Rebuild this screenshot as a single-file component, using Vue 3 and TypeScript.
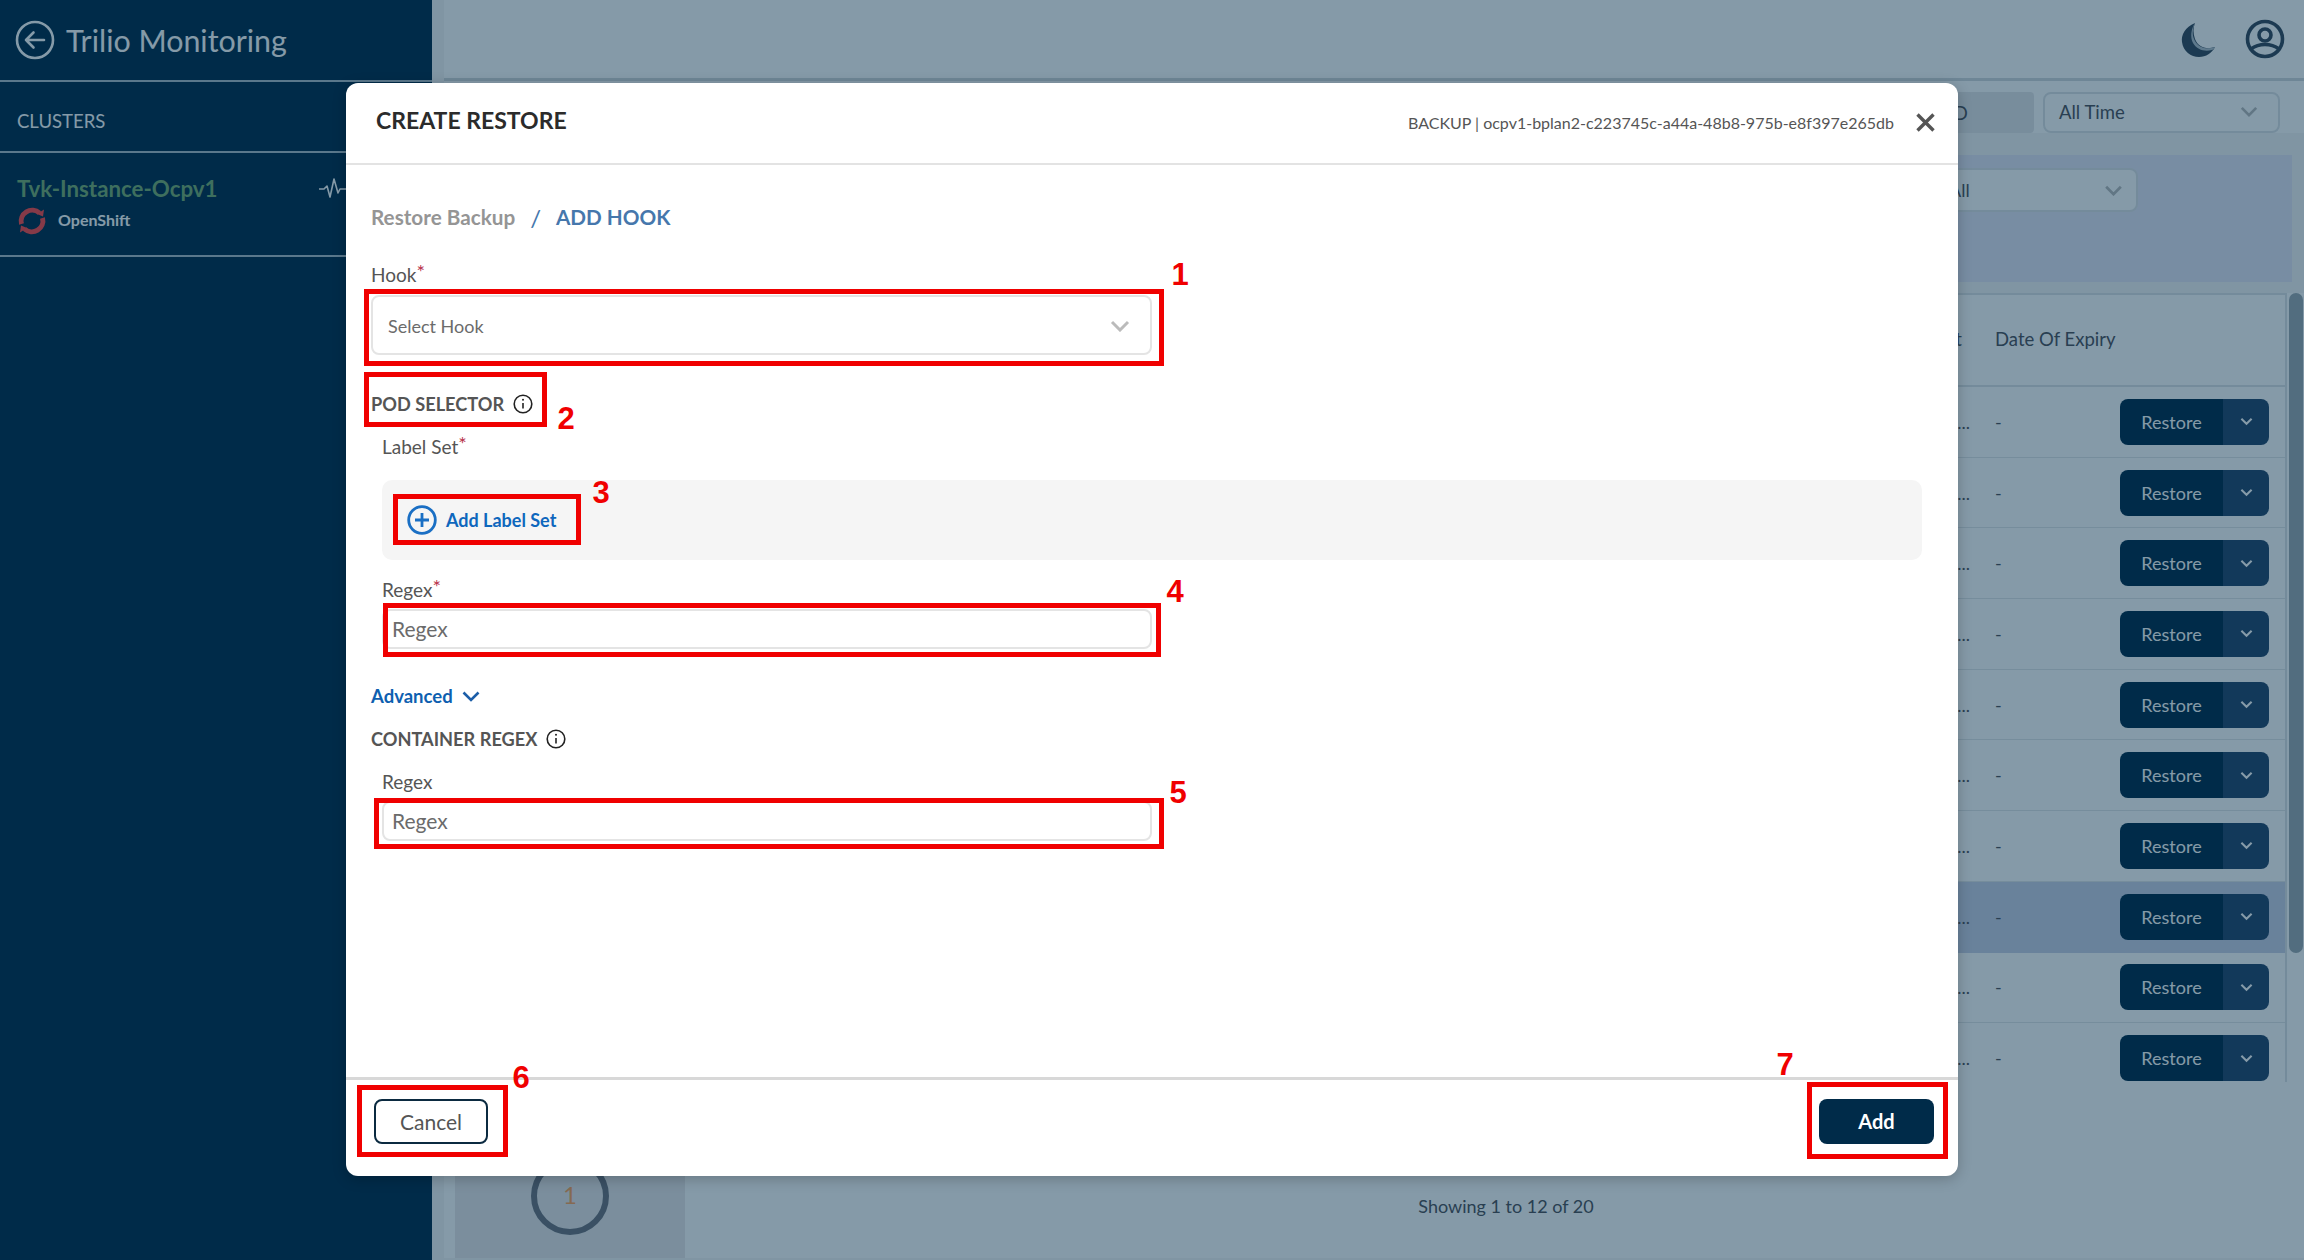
<script setup lang="ts">
interface Mark {
  id: number
  box: string
  num: string
}

const marks: Mark[] = [
  { id: 1, box: 'box-1', num: 'num-1' },
  { id: 2, box: 'box-2', num: 'num-2' },
  { id: 3, box: 'box-3', num: 'num-3' },
  { id: 4, box: 'box-4', num: 'num-4' },
  { id: 5, box: 'box-5', num: 'num-5' },
  { id: 6, box: 'box-6', num: 'num-6' },
  { id: 7, box: 'box-7', num: 'num-7' }
]

const rows: number[] = Array.from({ length: 10 }, (_, i) => i)
</script>

<template>
  <div class="app">
    <aside class="sidebar">
      <div class="brand">
        <svg class="back" viewBox="0 0 40 40" width="40" height="40" fill="none" stroke="#fff" stroke-width="2.6" stroke-linecap="round" stroke-linejoin="round">
          <circle cx="20" cy="20" r="18" />
          <path d="M29 20H11M18.5 12.5 11 20l7.5 7.5" />
        </svg>
        <span class="brand-name">Trilio Monitoring</span>
      </div>
      <div class="clusters">CLUSTERS</div>
      <div class="cluster">
        <div class="cluster-top">
          <span class="cluster-name">Tvk-Instance-Ocpv1</span>
          <svg class="pulse" viewBox="0 0 30 20" width="30" height="20" fill="none" stroke="#fff" stroke-width="1.6" stroke-linejoin="round" stroke-linecap="round">
            <path d="M0 11h5l3-3 3 11 4-18 4 14 2-4h7" />
          </svg>
        </div>
        <div class="cluster-type">
          <svg class="os-logo" viewBox="0 0 30 30" width="30" height="30" fill="none" stroke="#ff4847" stroke-width="5">
            <path d="M4.5 18A11 11 0 0 1 22.5 7" />
            <path d="M25.5 12A11 11 0 0 1 7.5 23" />
            <path d="M27 3.5 26 10.5 20 8zM3 26.5 4 19.5 10 22z" fill="#ff4847" stroke="none" />
          </svg>
          <span>OpenShift</span>
        </div>
      </div>
    </aside>

    <main class="main">
      <header class="topbar">
        <svg class="moon" viewBox="0 0 34 36" width="34" height="36">
          <path d="M14 1C4 5 0 13 1 20c1 9 9 15 17 15 7 0 13-4 16-10-9 3-17 0-20-8C12 11 12 6 14 1z" fill="#36485a" />
          <path d="M14 1c-3 7-3 13 0 18 4 7 12 9 20 6-1 2-2 3-3 3-7 2-15 0-19-7C9 15 10 7 14 1z" fill="#b5c0c9" />
        </svg>
        <svg class="user" viewBox="0 0 40 40" width="40" height="40" fill="none" stroke="#36485a" stroke-width="3.6">
          <circle cx="20" cy="20" r="17.5" />
          <circle cx="20" cy="16" r="6" />
          <path d="M6 30c8-6 20-6 28 0" />
        </svg>
      </header>

      <div class="toolbar">
        <div class="search">Backup ID</div>
        <div class="time-select">
          <span>All Time</span>
          <svg viewBox="0 0 20 12" width="18" height="11" fill="none" stroke="#bbb" stroke-width="3"><path d="M2 2l8 8 8-8" /></svg>
        </div>
      </div>

      <section class="filters">
        <div class="status-select">
          <span>All</span>
          <svg viewBox="0 0 20 12" width="19" height="11" fill="none" stroke="#bbb" stroke-width="3"><path d="M2 2l8 8 8-8" /></svg>
        </div>
      </section>

      <div class="content">
        <div class="side-card">
          <div class="ring"><span class="ring-num">1</span></div>
        </div>
        <div class="results">
          <div class="table-wrap">
            <div class="table">
              <div class="row head">
                <span class="col-a">Target</span>
                <span class="col-b">Date Of Expiry</span>
                <span class="col-c"></span>
              </div>
              <div v-for="r in rows" :key="r" class="row" :class="{ active: r === 7 }">
                <span class="col-a">...</span>
                <span class="col-b">-</span>
                <span class="col-c">
                  <span class="split">
                    <span class="split-main">Restore</span>
                    <span class="split-arrow">
                      <svg viewBox="0 0 14 9" width="13" height="9" fill="none" stroke="#fff" stroke-width="2.2"><path d="M1.5 1.5 7 7l5.5-5.5" /></svg>
                    </span>
                  </span>
                </span>
              </div>
            </div>
            <div class="scrollbar"></div>
          </div>
          <div class="pager"><span class="page-dot"></span></div>
          <div class="showing">Showing 1 to 12 of 20</div>
        </div>
      </div>
    </main>

    <div class="overlay">
      <div class="dialog">
        <div class="dialog-head">
          <h2>CREATE RESTORE</h2>
          <div class="head-right">
            <span class="backup">BACKUP | ocpv1-bplan2-c223745c-a44a-48b8-975b-e8f397e265db</span>
            <svg viewBox="0 0 19 19" width="19" height="19" fill="none" stroke="#555" stroke-width="3.4"><path d="M1.5 1.5l16 16M17.5 1.5l-16 16" /></svg>
          </div>
        </div>

        <div class="dialog-body">
          <div class="crumbs">
            <span class="crumb-muted">Restore Backup</span>
            <span class="crumb-sep">/</span>
            <span class="crumb-current">ADD HOOK</span>
          </div>

          <label class="field-label hook-label">Hook<sup>*</sup></label>
          <div class="select">
            <span>Select Hook</span>
            <svg viewBox="0 0 20 12" width="20" height="12" fill="none" stroke="#bbb" stroke-width="3"><path d="M2 2l8 8 8-8" /></svg>
          </div>

          <div class="section pod">
            <span>POD SELECTOR</span>
            <svg class="info" viewBox="0 0 20 20" width="20" height="20" fill="none" stroke="#222" stroke-width="1.6">
              <circle cx="10" cy="10" r="8.8" />
              <path d="M10 9v5.5" />
              <circle cx="10" cy="5.8" r="1" fill="#222" stroke="none" />
            </svg>
          </div>

          <div class="group">
            <label class="field-label label-set">Label Set<sup>*</sup></label>
            <div class="label-panel">
              <button class="add-label" type="button">
                <svg viewBox="0 0 30 30" width="30" height="30" fill="none" stroke="#1a6fc4" stroke-width="2.8">
                  <circle cx="15" cy="15" r="13.3" />
                  <path d="M15 8v14M8 15h14" />
                </svg>
                <span>Add Label Set</span>
              </button>
            </div>
            <label class="field-label regex-label">Regex<sup>*</sup></label>
            <div class="input">Regex</div>
          </div>

          <div class="advanced">
            <span>Advanced</span>
            <svg viewBox="0 0 18 11" width="18" height="11" fill="none" stroke="#1c5ea8" stroke-width="2.6"><path d="M1.5 1.5 9 9l7.5-7.5" /></svg>
          </div>

          <div class="section container">
            <span>CONTAINER REGEX</span>
            <svg class="info" viewBox="0 0 20 20" width="20" height="20" fill="none" stroke="#222" stroke-width="1.6">
              <circle cx="10" cy="10" r="8.8" />
              <path d="M10 9v5.5" />
              <circle cx="10" cy="5.8" r="1" fill="#222" stroke="none" />
            </svg>
          </div>

          <div class="group">
            <label class="field-label regex-label-2">Regex</label>
            <div class="input second">Regex</div>
          </div>
        </div>

        <div class="dialog-foot">
          <button class="btn-cancel" type="button">Cancel</button>
          <button class="btn-add" type="button">Add</button>
        </div>

        <template v-for="m in marks" :key="m.id">
          <div class="mark-box" :class="m.box"></div>
          <div class="mark-num" :class="m.num">{{ m.id }}</div>
        </template>
      </div>
    </div>
  </div>
</template>

<style>
html,
body {
  margin: 0;
  overflow: hidden;
}
</style>

<style scoped>
* {
  box-sizing: border-box;
}

.app {
  position: relative;
  display: flex;
  width: 2304px;
  height: 1260px;
  overflow: hidden;
  background: #fff;
  font-family: Lato, "Liberation Sans", sans-serif;
  color: #50515a;
}

/* Sidebar */
.sidebar {
  flex: 0 0 432px;
  background: #002b49;
  color: #fff;
}

.brand {
  display: flex;
  align-items: center;
  gap: 11px;
  height: 82px;
  padding-left: 15px;
  border-bottom: 2px solid #adbfca;
}

.brand-name {
  font-size: 30.4px;
}

.clusters {
  display: flex;
  align-items: center;
  height: 71px;
  padding: 8px 0 0 17px;
  font-size: 18.5px;
  border-bottom: 2px solid #adbfca;
}

.cluster {
  height: 104px;
  padding: 22px 0 0 17px;
  border-bottom: 2px solid #adbfca;
}

.cluster-top {
  display: flex;
  align-items: center;
  justify-content: space-between;
  height: 26px;
  padding-right: 83px;
}

.cluster-name {
  font-size: 22.3px;
  font-weight: 700;
  color: #78ac71;
  white-space: nowrap;
}

.cluster-type {
  display: flex;
  align-items: center;
  gap: 11px;
  margin-top: 2px;
  font-size: 16px;
  font-weight: 700;
}

.os-logo {
  margin-top: 3px;
}

/* Main background */
.main {
  flex: 1;
  display: flex;
  flex-direction: column;
  min-width: 0;
  padding-left: 12px;
  background: #f6f6f6;
}

.topbar {
  display: flex;
  align-items: center;
  justify-content: flex-end;
  gap: 30px;
  height: 81px;
  padding-right: 19px;
  background: #fff;
  border-bottom: 3px solid #d3d8dc;
}

.moon {
  margin-top: 1px;
}

.toolbar {
  display: flex;
  justify-content: flex-end;
  gap: 9px;
  height: 52px;
  padding: 11px 24px 0 0;
  background: #fff;
  color: #50515a;
  font-size: 18.5px;
}

.search {
  display: flex;
  align-items: center;
  width: 164px;
  height: 41px;
  padding-left: 14px;
  background: #e6e6e9;
  border-radius: 4px;
  white-space: nowrap;
}

.time-select {
  display: flex;
  align-items: center;
  justify-content: space-between;
  width: 237px;
  height: 41px;
  padding: 0 20px 2px 14px;
  border: 2px solid #dfe3e6;
  border-radius: 8px;
}

.filters {
  display: flex;
  justify-content: flex-end;
  height: 127px;
  margin: 22px 12px 0 0;
  padding: 13px 154px 0 0;
  background: #e7e7f6;
}

.status-select {
  display: flex;
  align-items: center;
  justify-content: space-between;
  width: 205px;
  height: 44px;
  padding: 0 13px 0 14px;
  background: #fff;
  border: 2px solid #dfe3e6;
  border-radius: 8px;
  color: #50515a;
  font-size: 18px;
}

.content {
  display: flex;
  gap: 40px;
  height: 965px;
  margin-top: 11px;
  padding-left: 11px;
  background: #fff;
}

.side-card {
  flex: 0 0 230px;
  display: flex;
  flex-direction: column;
  align-items: center;
  justify-content: flex-end;
  padding-bottom: 23px;
  background: #ebe9ea;
}

.ring {
  display: flex;
  align-items: center;
  justify-content: center;
  width: 78px;
  height: 78px;
  border: 6px solid #6f727d;
  border-radius: 50%;
  color: #ffa45a;
  font-size: 24px;
}

.ring-num {
  padding-bottom: 3px;
}

.results {
  flex: 1;
  min-width: 0;
}

.table-wrap {
  position: relative;
  display: flex;
  height: 789px;
  overflow: hidden;
  padding-right: 17px;
}

.table {
  flex: 1;
  border-top: 2px solid #dfe3e6;
  border-right: 2px solid #dfe3e6;
  height: 789px;
  overflow: hidden;
}

.scrollbar {
  position: absolute;
  top: 0;
  right: 1px;
  width: 14px;
  height: 660px;
  background: #9ea9b1;
  border-radius: 7px;
}

.row {
  display: flex;
  align-items: center;
  height: 70.7px;
  color: #50515a;
  font-size: 18px;
  border-bottom: 1px solid #e3e6e9;
}

.row.head {
  height: 92px;
  padding-bottom: 2px;
  font-size: 18.5px;
  border-bottom: 2px solid #dfe3e6;
}

.row.head .col-a {
  padding-right: 33px;
}

.row.active {
  background: #cad2e7;
  border-bottom-color: #cad2e7;
}

.col-a {
  flex: 1;
  min-width: 0;
  text-align: right;
  padding-right: 25px;
}

.col-b {
  flex: 0 0 125px;
  white-space: nowrap;
}

.col-c {
  flex: 0 0 165px;
  padding-right: 16px;
}

.split {
  display: flex;
  width: 149px;
  height: 46px;
  overflow: hidden;
  border-radius: 8px;
  color: #fff;
  font-size: 18px;
}

.split-main {
  display: flex;
  align-items: center;
  justify-content: center;
  flex: 0 0 103px;
  background: #002b49;
}

.split-arrow {
  display: flex;
  align-items: center;
  justify-content: center;
  flex: 1;
  background: #24466a;
}

.pager {
  display: flex;
  justify-content: center;
  height: 96px;
  padding: 68px 52px 0 0;
}

.page-dot {
  width: 26px;
  height: 26px;
  border-radius: 50%;
  background: #002b49;
}

.showing {
  margin-top: 15px;
  padding-right: 17px;
  text-align: center;
  font-size: 18px;
  line-height: 26px;
  color: #4f5259;
}

/* Dialog */
.overlay {
  position: absolute;
  inset: 0;
  display: flex;
  justify-content: center;
  align-items: flex-start;
  padding-top: 83px;
  background: rgba(0, 43, 73, 0.48);
}

.dialog {
  position: relative;
  display: flex;
  flex-direction: column;
  width: 1612px;
  height: 1093px;
  background: #fff;
  border-radius: 12px;
  box-shadow: 0 3px 14px rgba(0, 0, 0, 0.22);
}

.dialog-head {
  display: flex;
  align-items: center;
  justify-content: space-between;
  flex: 0 0 82px;
  padding: 0 23px 0 30px;
  border-bottom: 2px solid #e3e3e3;
}

.dialog-head h2 {
  margin: 0 0 6px;
  font-size: 23px;
  font-weight: 700;
  color: #2b2b2b;
}

.head-right {
  display: flex;
  align-items: center;
  gap: 22px;
  margin-bottom: 2px;
}

.backup {
  font-size: 16px;
  color: #555;
}

.dialog-body {
  flex: 1;
  padding: 37px 0 0 25px;
}

.crumbs {
  display: flex;
  align-items: center;
  height: 30px;
  font-size: 20.7px;
  font-weight: 700;
}

.crumb-muted {
  color: #959595;
}

.crumb-sep {
  margin: 0 15px;
  color: #4677ac;
  font-weight: 400;
  font-size: 24px;
}

.crumb-current {
  color: #4677ac;
}

.field-label {
  display: block;
  height: 20px;
  line-height: 20px;
  font-size: 19px;
  color: #555;
}

.field-label sup {
  position: relative;
  top: -3px;
  font-size: 20px;
  line-height: 0;
  vertical-align: baseline;
  color: #b8324a;
}

.hook-label {
  margin-top: 33px;
}

.select {
  display: flex;
  align-items: center;
  justify-content: space-between;
  width: 781px;
  height: 60px;
  margin-top: 10px;
  padding: 1px 20px 0 15px;
  border: 2px solid #e4e4e4;
  border-radius: 8px;
  font-size: 18px;
  color: #6b6b6b;
}

.section {
  display: flex;
  align-items: center;
  gap: 9px;
  height: 24px;
  font-size: 18.2px;
  font-weight: 700;
  color: #555;
}

.pod {
  margin-top: 37px;
}

.group {
  padding-left: 11px;
}

.label-set {
  margin-top: 21px;
}

.label-panel {
  display: flex;
  align-items: center;
  width: 1540px;
  height: 80px;
  margin-top: 23px;
  padding-left: 25px;
  background: #f5f5f5;
  border-radius: 10px;
}

.add-label {
  display: flex;
  align-items: center;
  gap: 9px;
  padding: 0;
  border: 0;
  background: none;
  font: 700 18px Lato, "Liberation Sans", sans-serif;
  color: #0e67bd;
}

.regex-label {
  margin-top: 20px;
}

.input {
  display: flex;
  align-items: center;
  width: 770px;
  height: 40px;
  margin-top: 9px;
  padding: 0 0 1px 8px;
  border: 2px solid #e4e4e4;
  border-radius: 8px;
  font-size: 21px;
  color: #6b6b6b;
}

.input.second {
  margin-top: 9px;
  padding-bottom: 2px;
}

.advanced {
  display: flex;
  align-items: center;
  gap: 9px;
  height: 24px;
  margin-top: 35px;
  font-size: 18.5px;
  font-weight: 700;
  color: #0e5fb0;
}

.container {
  margin-top: 19px;
}

.regex-label-2 {
  margin-top: 21px;
}

.dialog-foot {
  display: flex;
  align-items: center;
  justify-content: space-between;
  flex: 0 0 99px;
  padding: 0 24px 14px 28px;
  border-top: 3px solid #d8d8d8;
}

.btn-cancel,
.btn-add {
  height: 45px;
  border-radius: 8px;
  font: 400 21px Lato, "Liberation Sans", sans-serif;
}

.btn-cancel {
  width: 114px;
  background: #fff;
  border: 2px solid #0b2a40;
  color: #555;
}

.btn-add {
  width: 115px;
  background: #002b49;
  border: 0;
  color: #fff;
  font: 700 20px Lato, "Liberation Sans", sans-serif;
}

/* Annotation marks, placed over the dialog */
.mark-box {
  position: absolute;
  border: 5px solid #f00000;
}

.box-1 { left: 18px; top: 206px; width: 800px; height: 77px; }
.box-2 { left: 18px; top: 289px; width: 183px; height: 55px; }
.box-3 { left: 47px; top: 411px; width: 188px; height: 51px; }
.box-4 { left: 37px; top: 520px; width: 778px; height: 54px; }
.box-5 { left: 28px; top: 715px; width: 790px; height: 51px; }
.box-6 { left: 11px; top: 1002px; width: 151px; height: 72px; }
.box-7 { left: 1461px; top: 999px; width: 141px; height: 77px; }

.mark-num {
  position: absolute;
  transform: translate(-50%, -50%);
  font: 700 31px "Liberation Sans", Arial, sans-serif;
  line-height: 1;
  color: #f00000;
}

.num-1 { left: 834px; top: 191px; }
.num-2 { left: 220px; top: 335px; }
.num-3 { left: 255px; top: 409px; }
.num-4 { left: 829px; top: 508px; }
.num-5 { left: 832px; top: 709px; }
.num-6 { left: 175px; top: 994px; }
.num-7 { left: 1439px; top: 981px; }
</style>
